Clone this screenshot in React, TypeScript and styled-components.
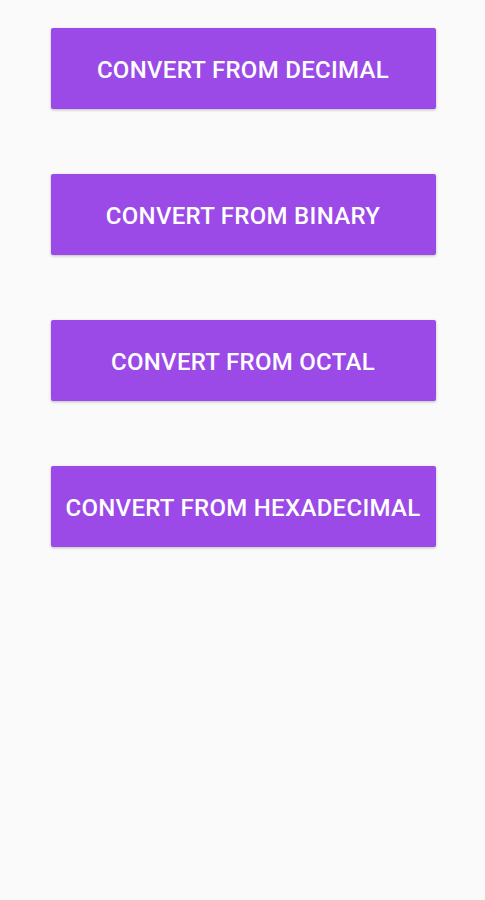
import React from 'react';
import styled, { createGlobalStyle } from 'styled-components';

const GlobalStyle = createGlobalStyle`
  html, body {
    margin: 0;
    padding: 0;
    background: #fafafa;
  }
  body {
    font-family: Roboto, 'Liberation Sans', sans-serif;
  }
`;

const Screen = styled.div`
  min-height: 900px;
  background: #fafafa;
  display: flex;
  flex-direction: column;
  align-items: center;
  padding-top: 28px;
  gap: 65px;
  box-sizing: border-box;
`;

const ConvertButton = styled.button`
  width: 385px;
  height: 81px;
  margin-left: 1px;
  border: none;
  border-radius: 2px;
  background: #9b4ae8;
  color: #ffffff;
  font-family: Roboto, 'Liberation Sans', sans-serif;
  font-weight: 500;
  font-size: 24px;
  letter-spacing: 0.3px;
  text-transform: uppercase;
  box-shadow: 0 1px 3px rgba(0, 0, 0, 0.25);
  padding: 3px 0 0;
  cursor: pointer;
`;

const options = ['Convert from Decimal', 'Convert from Binary', 'Convert from Octal', 'Convert from Hexadecimal'];

const App: React.FC = () => {
  return (
    <>
      <GlobalStyle />
      <Screen>
        {options.map((label) => (
          <ConvertButton key={label}>{label}</ConvertButton>
        ))}
      </Screen>
    </>
  );
};

export default App;
